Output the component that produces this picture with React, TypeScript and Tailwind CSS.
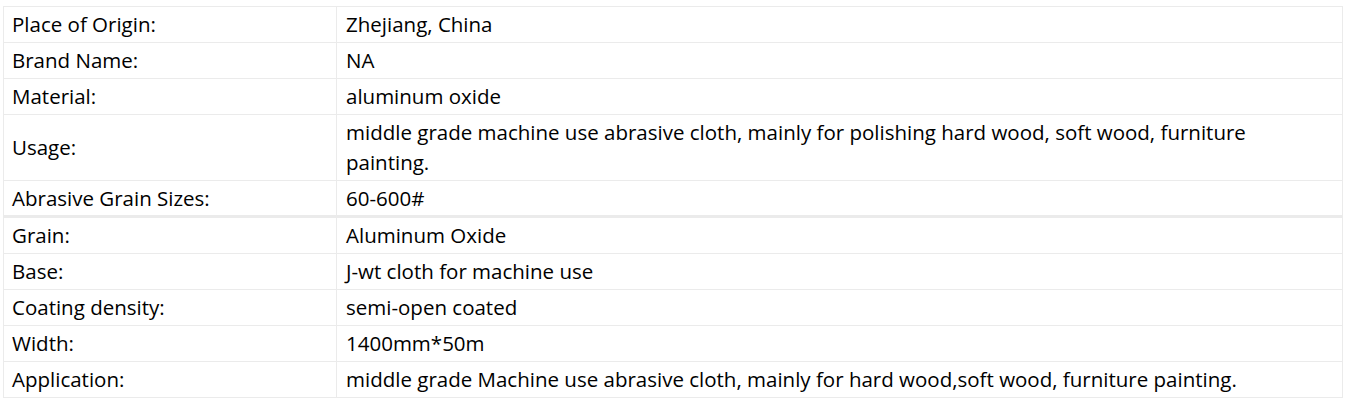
import React from "react";

const t1: [string, React.ReactNode][] = [
  ["Place of Origin:", "Zhejiang, China"],
  ["Brand Name:", "NA"],
  ["Material:", "aluminum oxide"],
  [
    "Usage:",
    "middle grade machine use abrasive cloth, mainly for polishing hard wood, soft wood, furniture painting.",
  ],
  ["Abrasive Grain Sizes:", "60-600#"],
];
const t2: [string, React.ReactNode][] = [
  ["Grain:", "Aluminum Oxide"],
  ["Base:", "J-wt cloth for machine use"],
  ["Coating density:", "semi-open coated"],
  ["Width:", "1400mm*50m"],
  ["Application:", "middle grade Machine use abrasive cloth, mainly for hard wood,soft wood, furniture painting."],
];

function Table({ rows, shortLast }: { rows: [string, React.ReactNode][]; shortLast?: boolean }) {
  return (
    <div className="border border-[#ebebeb]">
      {rows.map(([k, v], i) => {
        const short = shortLast && i === rows.length - 1;
        return (
          <div
            key={k}
            className={`grid grid-cols-[333px_1fr] ${i > 0 ? "border-t border-[#ebebeb]" : ""}`}
          >
            <div
              className={`pl-2 pr-2 pt-[2px] ${short ? "pb-[2px]" : "pb-[3px]"} border-r border-[#ebebeb] flex items-center`}
            >
              {k}
            </div>
            <div className={`pl-[9px] pr-2 pt-[2px] ${short ? "pb-[2px]" : "pb-[3px]"} flex items-center`}>{v}</div>
          </div>
        );
      })}
    </div>
  );
}

export default function App() {
  return (
    <div
      className="bg-white text-black text-[20.5px] leading-[30px] pl-[3px] pt-[6px] w-[1343px]"
      style={{ fontFamily: '"Open Sans", "Noto Sans", sans-serif' }}
    >
      <Table rows={t1} shortLast />
      <div className="h-[1px] bg-[#ebebeb]" />
      <Table rows={t2} />
    </div>
  );
}
